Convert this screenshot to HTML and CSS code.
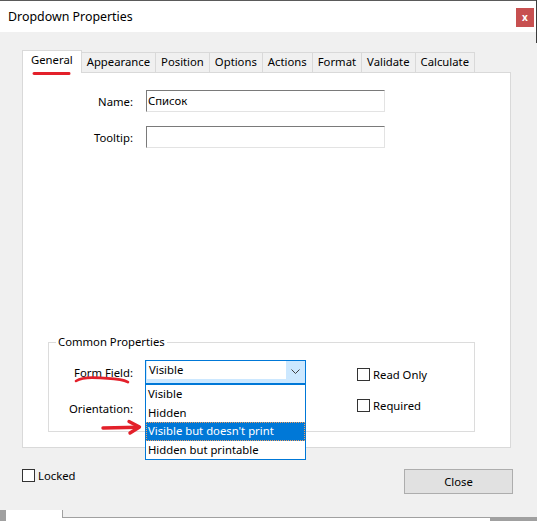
FILE: index.html
```html
<!DOCTYPE html>
<html lang="en">
<head>
<meta charset="utf-8">
<title>Dropdown Properties</title>
<link rel="stylesheet" href="styles.css">
</head>
<body>
<div class="window">
  <div class="titlebar">
    <span class="title">Dropdown Properties</span>
    <div class="close-x">x</div>
  </div>
  <div class="content">
    <div class="tabs">
      <div class="tab active">General</div>
      <div class="tab">Appearance</div>
      <div class="tab">Position</div>
      <div class="tab">Options</div>
      <div class="tab">Actions</div>
      <div class="tab">Format</div>
      <div class="tab">Validate</div>
      <div class="tab">Calculate</div>
    </div>
    <div class="panel">
      <div class="field-row">
        <span class="label">Name:</span>
        <div class="textbox">Список</div>
      </div>
      <div class="field-row">
        <span class="label">Tooltip:</span>
        <div class="textbox"></div>
      </div>
      <fieldset class="group">
        <legend>Common Properties</legend>
        <div class="group-grid">
          <span class="label glabel">Form Field:</span>
          <div class="select">
            <div class="select-text">Visible</div>
            <div class="select-btn">
              <svg width="9" height="5" viewBox="0 0 9 5"><path d="M0.5 0.5 L4.5 4.5 L8.5 0.5" fill="none" stroke="#404040" stroke-width="1"/></svg>
            </div>
            <ul class="list">
              <li>Visible</li>
              <li>Hidden</li>
              <li class="sel">Visible but doesn't print</li>
              <li>Hidden but printable</li>
            </ul>
          </div>
          <div class="checks">
            <div class="check"><span class="box"></span>Read Only</div>
            <div class="check"><span class="box"></span>Required</div>
          </div>
          <span class="label glabel">Orientation:</span>
          <div class="select-empty"></div>
        </div>
      </fieldset>
    </div>
    <div class="footer">
      <div class="check"><span class="box"></span>Locked</div>
      <div class="button">Close</div>
    </div>
  </div>
</div>
<div class="desktop">
  <div class="d-a"></div>
  <div class="d-b"></div>
  <div class="d-c">
    <div class="d-c-top"></div>
    <div class="d-c-bottom"><div class="d-c-white"></div><div class="d-c-gray"></div></div>
  </div>
</div>
<svg class="marks" width="537" height="521" viewBox="0 0 537 521">
  <path d="M34 73.6 L69 73.4" fill="none" stroke="#e3202a" stroke-width="3" stroke-linecap="round"/>
  <path d="M76 381 C80 378.5 85 377.6 92 377.6 C102 377.8 112 378.4 120 379.6 C124 380.2 126 381 128 382.2" fill="none" stroke="#e3202a" stroke-width="2.6" stroke-linecap="round"/>
  <path d="M103 428 L138 427.2" fill="none" stroke="#e3202a" stroke-width="3.4" stroke-linecap="round"/>
  <path d="M129 421.5 L139.5 427 L130 433" fill="none" stroke="#e3202a" stroke-width="3.4" stroke-linecap="round" stroke-linejoin="round"/>
</svg>
</body>
</html>
```
FILE: styles.css
```css
* { box-sizing: border-box; }
html, body { margin: 0; padding: 0; }
body {
  width: 537px;
  height: 521px;
  overflow: hidden;
  background: #fff;
  font-family: "Noto Sans", "Liberation Sans", sans-serif;
  font-size: 11.3px;
  color: #000;
  position: relative;
}
.window {
  position: relative;
  width: 537px;
  height: 510px;
  border-top: 1px solid #5a5a5a;
  background: #f0f0f0;
  display: flex;
  flex-direction: column;
}
.window::after {
  content: "";
  position: absolute;
  right: 0;
  top: -1px;
  width: 1px;
  height: 43px;
  background: #3c3c3c;
}
.titlebar {
  height: 31px;
  background: #fff;
  display: flex;
  justify-content: space-between;
  align-items: center;
  padding: 0 3px 0 8px;
  flex: none;
}
.title { font-size: 12.4px; }
.close-x {
  align-self: flex-start;
  margin-top: 7px;
  width: 18px;
  height: 19px;
  background: #c75050;
  color: #fff;
  font-weight: bold;
  font-size: 10px;
  line-height: 18px;
  text-align: center;
}
.content {
  flex: 1;
  display: flex;
  flex-direction: column;
  padding: 18px 0 0 22px;
}
.tabs {
  display: flex;
  align-items: flex-end;
  height: 22px;
  position: relative;
  z-index: 1;
}
.tab {
  height: 20px;
  line-height: 18px;
  padding: 0 5px;
  border: 1px solid #d9d9d9;
  border-bottom: none;
  margin-left: -1px;
  background: #f0f0f0;
  white-space: nowrap;
}
.tab.active {
  height: 23px;
  margin-bottom: -1px;
  margin-left: 0;
  padding: 0 8px;
  line-height: 18px;
  background: #fff;
  position: relative;
  z-index: 2;
}
.panel {
  width: 489px;
  height: 376px;
  background: #fff;
  border: 1px solid #d9d9d9;
  padding-top: 17px;
}
.field-row {
  display: flex;
  align-items: center;
  gap: 13px;
  height: 22px;
  margin-bottom: 14px;
}
.label {
  width: 110px;
  text-align: right;
  white-space: nowrap;
}
.textbox {
  width: 239px;
  height: 22px;
  border-top: 1px solid #7a7a7a;
  border-left: 1px solid #7a7a7a;
  border-right: 1px solid #e3e3e3;
  border-bottom: 1px solid #e3e3e3;
  padding-left: 1px;
  line-height: 19px;
}
.group {
  margin: 186px 0 0 25px;
  width: 427px;
  padding: 0;
  border: 1px solid #dcdcdc;
  min-width: 0;
}
.group legend {
  margin-left: 7px;
  padding: 0 2px;
  line-height: 16px;
}
.group-grid {
  display: grid;
  grid-template-columns: 84px 161px auto;
  grid-template-rows: 24px 24px;
  column-gap: 12px;
  row-gap: 12px;
  padding: 10px 0 11px 0;
  align-items: center;
}
.glabel { width: auto; }
.select {
  position: relative;
  height: 24px;
  border: 1px solid #0078d7;
  background: #cce8ff;
  display: flex;
}
.select-text {
  flex: 1;
  background: #fff;
  margin: 0 0 4px 1px;
  padding-left: 2px;
  line-height: 18px;
}
.select-btn {
  width: 19px;
  display: flex;
  align-items: center;
  justify-content: center;
  padding-bottom: 1px;
}
.list {
  position: absolute;
  top: 23px;
  left: -1px;
  width: 161px;
  height: 76px;
  margin: 0;
  padding: 0;
  list-style: none;
  background: #fff;
  border: 1px solid #0078d7;
  z-index: 5;
}
.list li {
  height: 18.5px;
  line-height: 18px;
  padding-left: 2px;
  white-space: nowrap;
}
.list li.sel {
  background: #0078d7;
  color: #fff;
  outline: 1px dotted #f0a060;
  outline-offset: -1px;
}
.checks {
  grid-column: 3;
  grid-row: 1 / span 2;
  align-self: start;
  margin-left: 39px;
  padding-top: 8px;
  display: flex;
  flex-direction: column;
  gap: 18px;
}
.check {
  display: flex;
  align-items: center;
  gap: 3px;
  height: 13px;
}
.box {
  width: 13px;
  height: 13px;
  border: 1px solid #333;
  background: #fff;
  flex: none;
}
.footer {
  display: flex;
  justify-content: space-between;
  align-items: flex-start;
  margin-top: 21px;
  padding-right: 24px;
}
.button {
  width: 109px;
  height: 25px;
  border: 1px solid #adadad;
  background: #e1e1e1;
  text-align: center;
  line-height: 23px;
}
.desktop {
  height: 11px;
  display: flex;
}
.d-a { width: 6px; background: #a0a0a0; }
.d-b { width: 56px; background: #fff; }
.d-c { flex: 1; display: flex; flex-direction: column; }
.d-c-top {
  height: 8px;
  background: #f0f0f0;
  border-left: 1px solid #a0a0a0;
  border-bottom: 1px solid #a0a0a0;
}
.d-c-bottom { flex: 1; display: flex; }
.d-c-white { width: 428px; background: #fff; }
.d-c-gray { flex: 1; background: #a0a0a0; }
.marks {
  position: absolute;
  left: 0;
  top: 0;
  pointer-events: none;
  z-index: 10;
}
```
